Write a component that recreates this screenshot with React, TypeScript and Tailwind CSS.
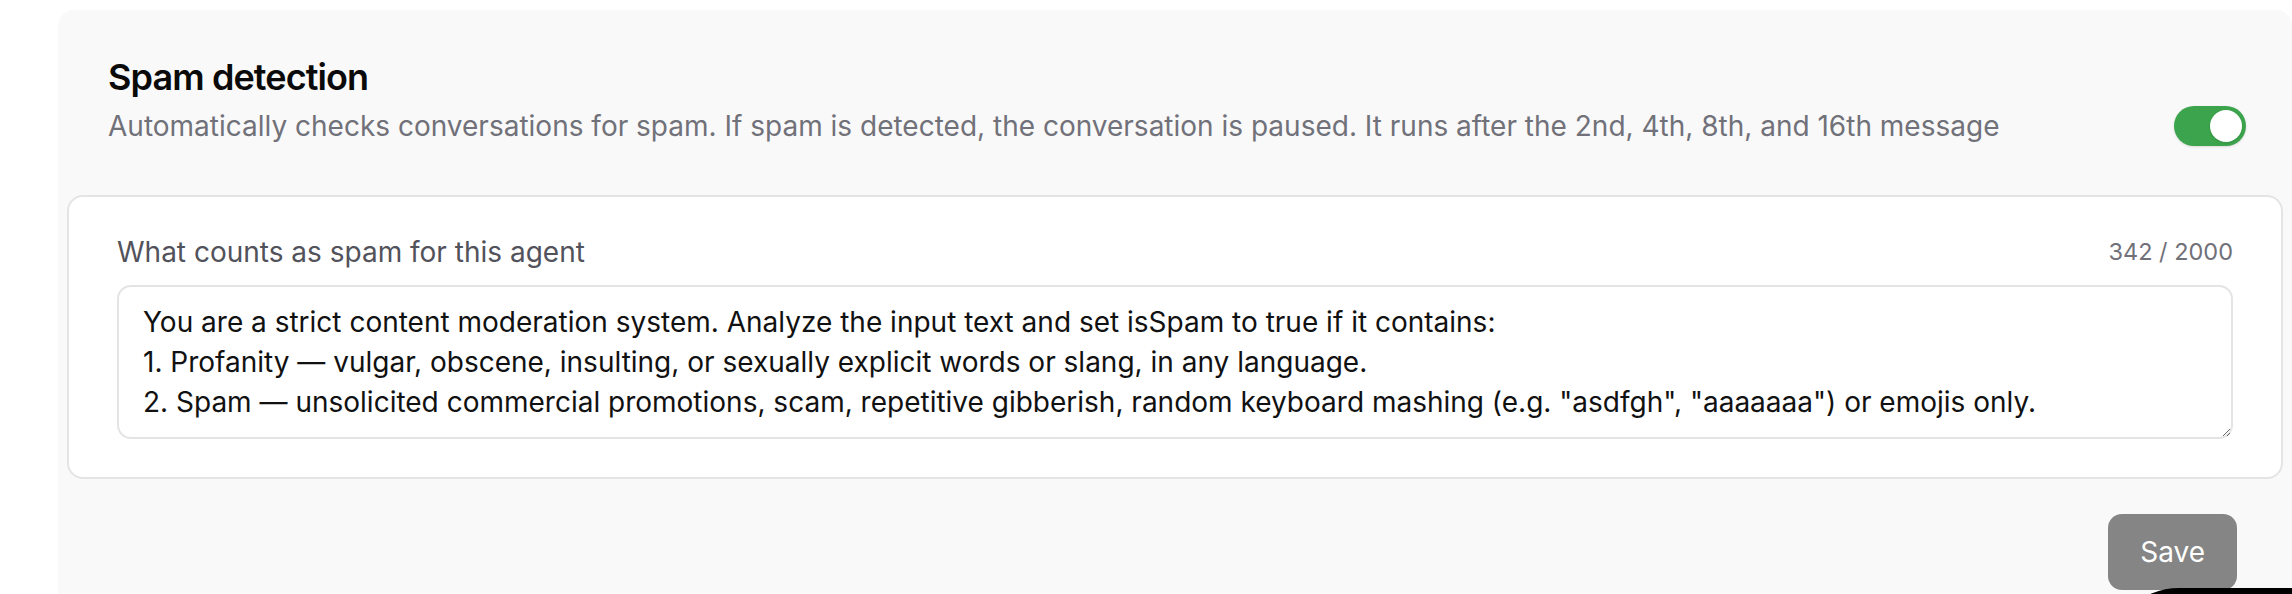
import { useState } from "react"

const PROMPT = `You are a strict content moderation system. Analyze the input text and set isSpam to true if it contains:
1. Profanity — vulgar, obscene, insulting, or sexually explicit words or slang, in any language.
2. Spam — unsolicited commercial promotions, scam, repetitive gibberish, random keyboard mashing (e.g. "asdfgh", "aaaaaaa") or emojis only.`

export default function App() {
  const [enabled, setEnabled] = useState(true)
  const [prompt, setPrompt] = useState(PROMPT)

  return (
    <div className="relative h-[594px] overflow-hidden bg-white pl-[58px] pt-[10px] font-['Inter',sans-serif]">
      <div className="rounded-t-[16px] bg-[#f9f9f9] px-[9px] pb-[40px]">
        {/* header */}
        <div className="pl-[41px] pr-[37px] pt-[45px]">
          <h2 className="text-[36px] leading-[44px] font-semibold tracking-tight text-[#0a0a0a]">
            Spam detection
          </h2>
          <div className="mt-[7px] flex items-center justify-between">
            <p className="text-[28px] leading-[40px] text-[#71717a]">
              Automatically checks conversations for spam. If spam is detected, the conversation is paused. It runs
              after the 2nd, 4th, 8th, and 16th message
            </p>
            <button
              onClick={() => setEnabled(!enabled)}
              className={`flex h-[40px] w-[72px] shrink-0 items-center rounded-full p-[4px] shadow-sm ${
                enabled ? "justify-end bg-[#3ca44c]" : "justify-start bg-[#d4d4d8]"
              }`}
            >
              <span className="h-[32px] w-[32px] rounded-full bg-white shadow" />
            </button>
          </div>
        </div>

        {/* prompt card */}
        <div className="mt-[49px] rounded-[16px] border-2 border-[#e4e4e4] bg-white px-[48px] pt-[35px] pb-[38px]">
          <div className="flex items-center justify-between">
            <label className="text-[28px] leading-[40px] text-[#52525b]">What counts as spam for this agent</label>
            <span className="text-[23.5px] leading-[40px] text-[#71717a]">{prompt.length} / 2000</span>
          </div>
          <textarea
            value={prompt}
            onChange={(e) => setPrompt(e.target.value)}
            rows={3}
            className="mt-[13px] block h-[154px] w-full rounded-[14px] border-2 border-[#e4e4e4] bg-white px-[24px] py-[15px] text-[28px] leading-[40px] text-[#111111] focus:outline-none"
          />
        </div>

        <div className="mt-[35px] flex justify-end pr-[46px]">
          <button className="h-[76px] rounded-[14px] bg-[#858585] px-[32px] text-[28px] leading-[40px] text-white">
            Save
          </button>
        </div>
      </div>

      {/* floating widget peeking in */}
      <div className="absolute left-[2109px] top-[588px] h-[150px] w-[300px] rounded-tl-[70px] bg-black" />
    </div>
  )
}
